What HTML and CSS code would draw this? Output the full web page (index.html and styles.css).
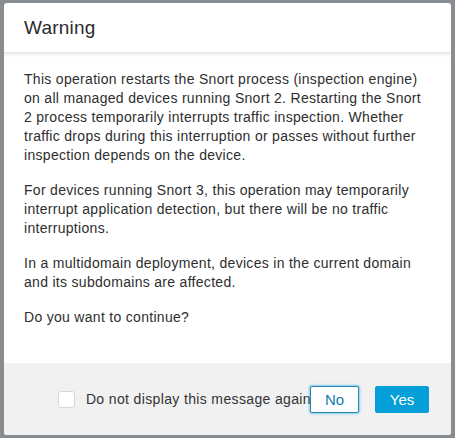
FILE: index.html
```html
<!DOCTYPE html>
<html>
<head>
<meta charset="utf-8">
<link rel="stylesheet" href="styles.css">
</head>
<body>
<div class="dialog">
  <div class="header"><h1 class="title">Warning</h1></div>
  <div class="content">
    <p>This operation restarts the Snort process (inspection engine) on all managed devices running Snort 2. Restarting the Snort 2 process temporarily interrupts traffic inspection. Whether traffic drops during this interruption or passes without further inspection depends on the device.</p>
    <p>For devices running Snort 3, this operation may temporarily interrupt application detection, but there will be no traffic interruptions.</p>
    <p>In a multidomain deployment, devices in the current domain and its subdomains are affected.</p>
    <p>Do you want to continue?</p>
  </div>
  <div class="footer">
    <label class="check"><span class="box"></span><span class="check-label">Do not display this message again</span></label>
    <button class="btn btn-no">No</button>
    <button class="btn btn-yes">Yes</button>
  </div>
</div>
</body>
</html>
```
FILE: styles.css
```css
html, body { margin: 0; padding: 0; }
body {
  background: #878d91;
  width: 455px;
  height: 438px;
  overflow: hidden;
  font-family: "Liberation Sans", Arial, sans-serif;
  color: #2b2b2b;
  padding: 3px 4px;
  box-sizing: border-box;
}
.dialog {
  width: 447px;
  height: 432px;
  background: #fff;
  border-radius: 3px;
  display: flex;
  flex-direction: column;
  overflow: hidden;
}
.header {
  height: 50px;
  flex: none;
  display: flex;
  align-items: center;
  padding: 0 20px;
  box-shadow: 0 2px 3px rgba(0,0,0,0.08);
  border-bottom: 1px solid #e6e6e6;
  box-sizing: border-box;
  position: relative;
  z-index: 1;
}
.title {
  margin: 0;
  font-size: 19px;
  font-weight: 400;
  letter-spacing: 0.2px;
  color: #2b2b2b;
}
.content {
  flex: 1;
  padding: 17px 20px 0;
  font-size: 14px;
  line-height: 19px;
  letter-spacing: 0.3px;
  color: #2e2e2e;
}
.content p { margin: 0 0 16px; }
.footer {
  height: 72px;
  flex: none;
  background: #f1f1f1;
  display: flex;
  align-items: center;
  justify-content: flex-end;
  padding: 0 22px 0 20px;
  box-sizing: border-box;
}
.check {
  display: flex;
  align-items: center;
  font-size: 14px;
  letter-spacing: 0.36px;
  color: #333;
}
.box {
  width: 15px;
  height: 15px;
  border: 1px solid #d6d6d6;
  border-radius: 3px;
  background: #fff;
  margin-right: 11px;
}
.btn {
  font-family: inherit;
  font-size: 15px;
  height: 27px;
  border-radius: 2px;
  padding: 0;
  cursor: pointer;
}
.btn-no {
  width: 49px;
  margin-left: -1px;
  background: #fff;
  color: #0d7cb5;
  border: 1px solid #2a86b5;
  box-shadow: 0 0 2px 1px rgba(4,159,217,0.45);
}
.btn-yes {
  width: 54px;
  margin-left: 16px;
  background: #049fd9;
  color: #fff;
  border: 1px solid #049fd9;
}
```
